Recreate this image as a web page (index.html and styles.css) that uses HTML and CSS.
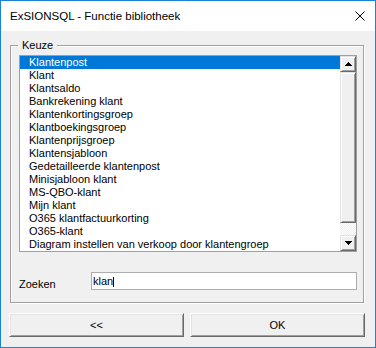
FILE: index.html
```html
<!DOCTYPE html>
<html lang="nl">
<head>
  <meta charset="UTF-8">
  <title>ExSIONSQL - Functie bibliotheek</title>
  <link rel="stylesheet" href="styles.css">
</head>
<body>
  <div class="window">
    <div class="titlebar">
      <span class="title">ExSIONSQL - Functie bibliotheek</span>
      <svg class="close" width="10" height="10" viewBox="0 0 10 10">
        <path d="M0.5 0.5L9.5 9.5M9.5 0.5L0.5 9.5" stroke="#000" stroke-width="1" fill="none"/>
      </svg>
    </div>
    <div class="content">
      <fieldset class="group">
        <legend>Keuze</legend>
        <div class="listbox">
          <ul class="items">
            <li class="selected">Klantenpost</li>
            <li>Klant</li>
            <li>Klantsaldo</li>
            <li>Bankrekening klant</li>
            <li>Klantenkortingsgroep</li>
            <li>Klantboekingsgroep</li>
            <li>Klantenprijsgroep</li>
            <li>Klantensjabloon</li>
            <li>Gedetailleerde klantenpost</li>
            <li>Minisjabloon klant</li>
            <li>MS-QBO-klant</li>
            <li>Mijn klant</li>
            <li>O365 klantfactuurkorting</li>
            <li>O365-klant</li>
            <li>Diagram instellen van verkoop door klantengroep</li>
          </ul>
          <div class="scrollbar">
            <div class="sb-btn">
              <svg width="7" height="4" viewBox="0 0 7 4"><path d="M3 0h1v1h-1z M2 1h3v1h-3z M1 2h5v1h-5z M0 3h7v1h-7z" fill="#000"/></svg>
            </div>
            <div class="thumb"></div>
            <div class="track"></div>
            <div class="sb-btn">
              <svg width="7" height="4" viewBox="0 0 7 4"><path d="M0 0h7v1h-7z M1 1h5v1h-5z M2 2h3v1h-3z M3 3h1v1h-1z" fill="#000"/></svg>
            </div>
          </div>
        </div>
        <div class="search-row">
          <label for="zoeken">Zoeken</label>
          <div class="textbox" id="zoeken">klan<span class="caret"></span></div>
        </div>
      </fieldset>
      <div class="buttons">
        <button>&lt;&lt;</button>
        <button>OK</button>
      </div>
    </div>
  </div>
</body>
</html>
```

FILE: styles.css
```css
* {
  box-sizing: border-box;
}

body {
  margin: 0;
  font-family: "Liberation Sans", Arial, sans-serif;
  font-size: 11px;
  color: #000;
}

.window {
  width: 376px;
  height: 348px;
  border: 1px solid #1883d7;
  background-color: #f0f0f0;
}

.titlebar {
  height: 30px;
  background-color: #fff;
  display: flex;
  align-items: center;
  justify-content: space-between;
  padding: 0 10px 0 9px;
  font-size: 11.5px;
}

.content {
  padding: 0 10px 0 8px;
}

.group {
  margin: 8px 1px 0 1px;
  padding: 3px 6px 11px 8px;
  border: 1px solid #a0a0a0;
  box-shadow: inset 1px 1px #fff, 1px 1px #fff;
  min-width: 0;
}

.group legend {
  margin-left: -1px;
  padding: 0 4px;
  line-height: 13px;
  background-color: #f0f0f0;
}

.listbox {
  display: flex;
  height: 197px;
  border: 1px solid #a0a0a0;
  background-color: #fff;
}

.items {
  flex: 1;
  list-style: none;
  margin: 0;
  padding: 0;
  overflow: hidden;
}

.items li {
  height: 13px;
  line-height: 13px;
  padding-left: 9px;
  white-space: nowrap;
}

.items li.selected {
  background-color: #0078d7;
  color: #fff;
}

.scrollbar {
  width: 16px;
  display: flex;
  flex-direction: column;
}

.sb-btn, .thumb {
  background-color: #f0f0f0;
  border-top: 1px solid #e3e3e3;
  border-left: 1px solid #e3e3e3;
  border-right: 1px solid #696969;
  border-bottom: 1px solid #696969;
  box-shadow: inset 1px 1px #fff, inset -1px -1px #a0a0a0;
}

.sb-btn {
  height: 16px;
  display: flex;
  align-items: center;
  justify-content: center;
}

.sb-btn svg {
  display: block;
}

.thumb {
  height: 151px;
}

.track {
  flex: 1;
  background: repeating-conic-gradient(#fff 0 25%, #f0f0f0 0 50%) 0 0 / 2px 2px;
}

.search-row {
  display: flex;
  margin-top: 20px;
}

.search-row label {
  width: 72px;
  padding-top: 6px;
  line-height: 13px;
}

.textbox {
  flex: 1;
  height: 18px;
  border: 1px solid #adadad;
  background-color: #fff;
  padding: 2px 1px;
  line-height: 13px;
}

.caret {
  display: inline-block;
  width: 1px;
  height: 10px;
  background-color: #000;
  vertical-align: -2px;
}

.buttons {
  display: flex;
  gap: 6px;
  margin-top: 10px;
}

.buttons button {
  flex: 1;
  height: 24px;
  font-family: "Liberation Sans", Arial, sans-serif;
  font-size: 11px;
  color: #000;
  background-color: #f0f0f0;
  border-top: 1px solid #fff;
  border-left: 1px solid #fff;
  border-right: 1px solid #696969;
  border-bottom: 1px solid #696969;
  box-shadow: inset 1px 1px #e3e3e3, inset -1px -1px #a0a0a0;
  padding: 0;
}
```
